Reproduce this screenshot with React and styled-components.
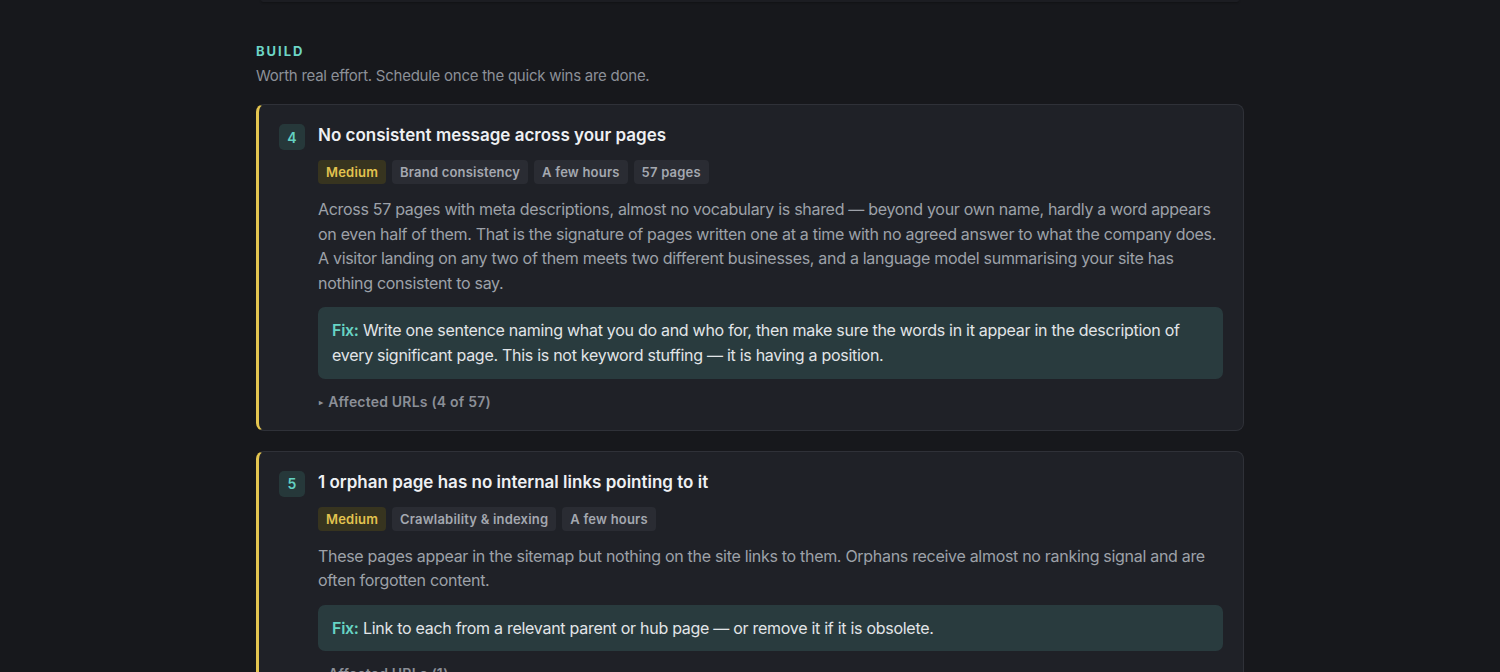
import React from "react";
import styled, { createGlobalStyle } from "styled-components";

const Global = createGlobalStyle`
  body {
    margin: 0;
    background: #17181c;
    font-family: Inter, "Noto Sans", sans-serif;
    -webkit-font-smoothing: antialiased;
  }
`;

export default function App() {
  const issues = [
    {
      n: 4,
      title: "No consistent message across your pages",
      tags: ["Brand consistency", "A few hours", "57 pages"],
      body: "Across 57 pages with meta descriptions, almost no vocabulary is shared — beyond your own name, hardly a word appears on even half of them. That is the signature of pages written one at a time with no agreed answer to what the company does. A visitor landing on any two of them meets two different businesses, and a language model summarising your site has nothing consistent to say.",
      fix: "Write one sentence naming what you do and who for, then make sure the words in it appear in the description of every significant page. This is not keyword stuffing — it is having a position.",
      urls: "Affected URLs (4 of 57)",
    },
    {
      n: 5,
      title: "1 orphan page has no internal links pointing to it",
      tags: ["Crawlability & indexing", "A few hours"],
      body: "These pages appear in the sitemap but nothing on the site links to them. Orphans receive almost no ranking signal and are often forgotten content.",
      fix: "Link to each from a relevant parent or hub page — or remove it if it is obsolete.",
      urls: "Affected URLs (1)",
    },
  ];

  return (
    <Page>
      <Global />
      <PrevEdge />
      <Section>
        <Label>Build</Label>
        <Sub>Worth real effort. Schedule once the quick wins are done.</Sub>
        {issues.map((it) => (
          <Card key={it.n}>
            <Head>
              <Num>{it.n}</Num>
              <Title>{it.title}</Title>
            </Head>
            <Content>
              <Tags>
                <Tag severity>Medium</Tag>
                {it.tags.map((t) => (
                  <Tag key={t}>{t}</Tag>
                ))}
              </Tags>
              <Body>{it.body}</Body>
              <Fix>
                <b>Fix:</b> {it.fix}
              </Fix>
              <Urls>
                <Caret>▸</Caret>
                {it.urls}
              </Urls>
            </Content>
          </Card>
        ))}
      </Section>
    </Page>
  );
}

const Page = styled.div`
  height: 672px;
  overflow: hidden;
`;

const PrevEdge = styled.div`
  width: 978px;
  height: 2px;
  margin: 0 auto;
  background: #1c1d22;
  border-radius: 0 0 8px 8px;
  box-shadow: 0 1px 2px rgba(0, 0, 0, 0.3);
`;

const Section = styled.section`
  width: 988px;
  margin: 0 auto;
  padding-top: 40px;
`;

const Label = styled.div`
  color: #6dd5c6;
  font-size: 13px;
  font-weight: 700;
  letter-spacing: 2px;
  text-transform: uppercase;
  line-height: 18px;
`;

const Sub = styled.div`
  color: #8c9098;
  font-size: 15px;
  letter-spacing: -0.25px;
  line-height: 22px;
  margin-top: 5px;
  margin-bottom: 17px;
`;

const Card = styled.div`
  background: #1f2127;
  border: 1px solid #2f3138;
  border-left: 3px solid #e4c550;
  border-radius: 8px;
  padding: 19px 20px 19px 20px;
  margin-bottom: 20px;
`;

const Head = styled.div`
  display: flex;
  align-items: flex-start;
  gap: 13px;
`;

const Num = styled.div`
  width: 26px;
  height: 26px;
  border-radius: 5px;
  background: #26383a;
  color: #63d1c2;
  font-size: 14px;
  font-weight: 600;
  display: flex;
  align-items: center;
  justify-content: center;
  flex: none;
`;

const Title = styled.h3`
  margin: 0;
  color: #eef0f3;
  font-size: 17px;
  font-weight: 600;
  line-height: 22px;
`;

const Content = styled.div`
  padding-left: 39px;
`;

const Tags = styled.div`
  display: flex;
  gap: 6px;
  margin-top: 10px;
`;

const Tag = styled.span`
  height: 24px;
  padding: 0 8px;
  border-radius: 4px;
  display: inline-flex;
  align-items: center;
  font-size: 13px;
  font-weight: 600;
  letter-spacing: 0.2px;
  background: ${(p) => (p.severity ? "#37341f" : "#2a2c33")};
  color: ${(p) => (p.severity ? "#e2c34f" : "#a4a8b0")};
`;

const Body = styled.p`
  margin: 13px 0 0;
  color: #9da1a9;
  font-size: 16px;
  letter-spacing: -0.3px;
  line-height: 24.6px;
`;

const Fix = styled.div`
  margin-top: 12px;
  background: #293b3e;
  border-radius: 7px;
  padding: 11px 14px;
  color: #e2e5e8;
  font-size: 16px;
  letter-spacing: -0.28px;
  line-height: 24.6px;
  b {
    color: #67d4c4;
    font-weight: 600;
  }
`;

const Urls = styled.div`
  margin-top: 14px;
  color: #8b8f97;
  font-size: 14px;
  font-weight: 600;
  letter-spacing: 0.2px;
  line-height: 18px;
  display: flex;
  align-items: center;
`;

const Caret = styled.span`
  font-size: 8px;
  margin-right: 5px;
  margin-left: 1px;
`;
